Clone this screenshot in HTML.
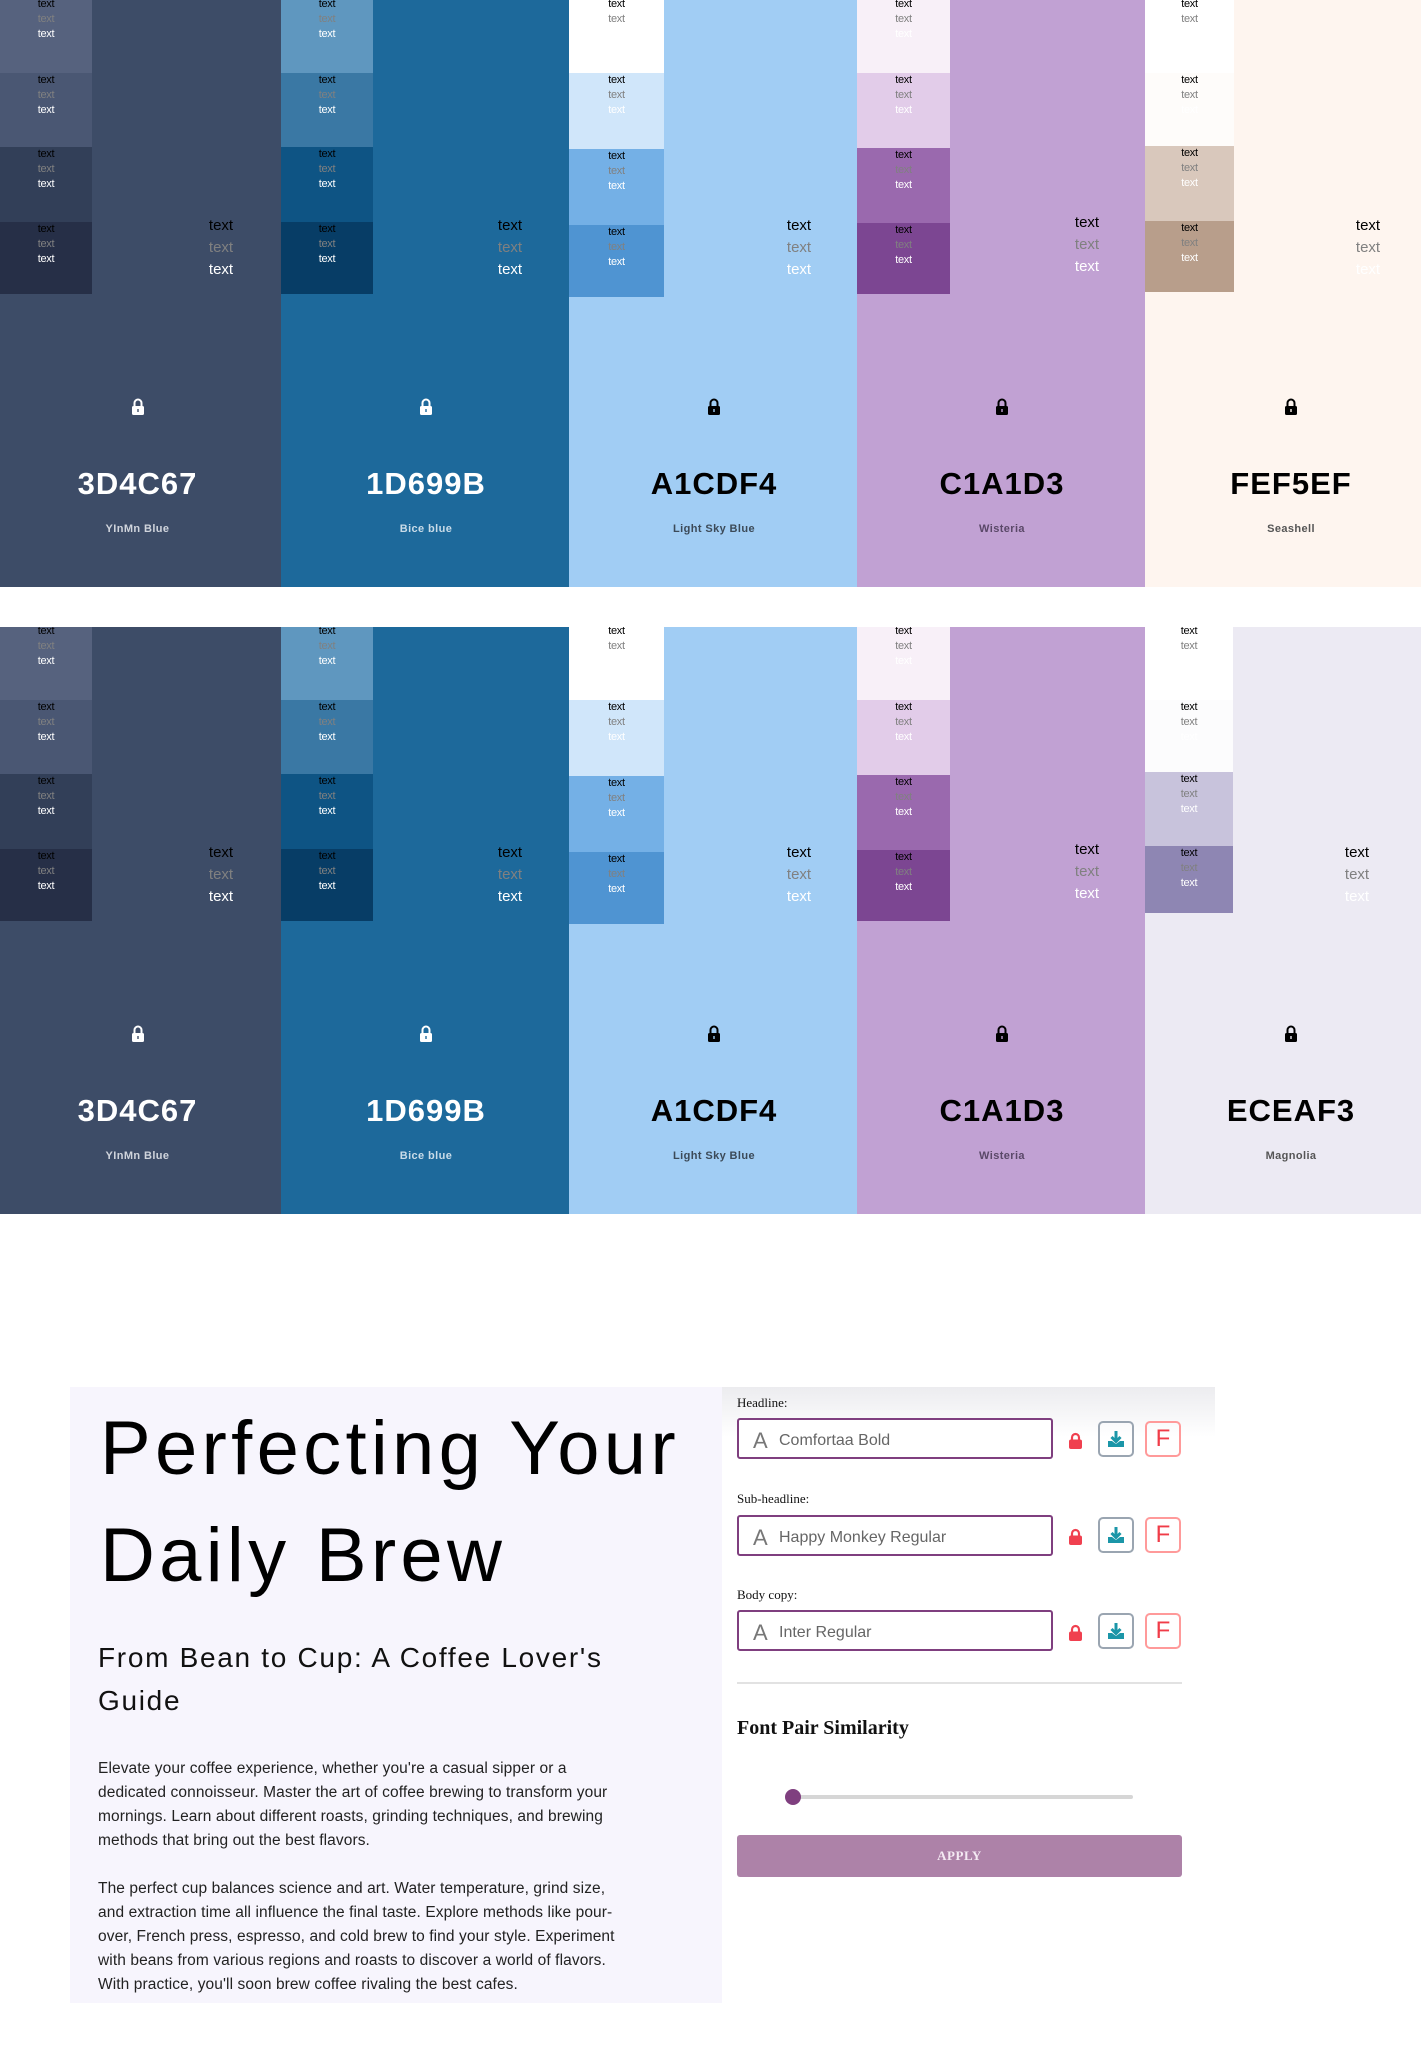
<!DOCTYPE html>
<html><head><meta charset="utf-8"><style>
*{margin:0;padding:0;box-sizing:border-box}
body{width:1421px;height:2046px;background:#fff;position:relative;overflow:hidden;font-family:"Liberation Sans",sans-serif}
.pal{position:absolute;left:0;width:1421px;height:587px}
.col{position:absolute;top:0;height:100%;overflow:hidden}
.sw{position:absolute;left:0;width:92px;text-align:center;font-size:11px;line-height:15px;letter-spacing:-0.3px}
.sw div:nth-child(1){color:#000}.sw div:nth-child(2){color:#808080}.sw div:nth-child(3){color:#fff}
.big{position:absolute;left:191px;width:60px;top:215px;text-align:center;font-size:15px;line-height:22px}
.big div:nth-child(1){color:#000}.big div:nth-child(2){color:#808080}.big div:nth-child(3){color:#fff}
.lock,.hex,.nm{transform:translateX(var(--s))}
.lock{position:absolute;left:50%;margin-left:-7px;top:398px;width:14px;height:17px}
.hex{position:absolute;left:0;right:0;top:466px;text-align:center;font-size:31px;font-weight:bold;letter-spacing:1px}
.nm{position:absolute;left:0;right:0;top:523px;text-align:center;font-size:11px;font-weight:bold;letter-spacing:0.4px}
.c1{--s:-3px}.c2{--s:1px}.c3{--s:1px}.c4{--s:1px}.c5{--s:8px}
.card{position:absolute;left:70px;top:1387px;width:652px;height:616px;background:#f7f5fd}
.rp{position:absolute;left:722px;top:1387px;width:493px;height:616px;background:#fff}
.rp .sh{position:absolute;left:0;right:0;top:0;height:50px;background:linear-gradient(#ececef,#fff)}
.lab{position:absolute;left:15px;font-family:"Liberation Serif",serif;font-size:13px;color:#111}
.inp{position:absolute;left:15px;width:316px;height:41px;border:2px solid #7f3f7f;border-radius:3px;background:#fff;font-size:16px;color:#666;padding-left:40px;line-height:41px}
.inp span{position:absolute;left:14px;top:0;font-size:22px;color:#777}
.lk{position:absolute;left:346px;width:15px;height:17px}
.dl{position:absolute;left:376px;width:36px;height:36px;border:2px solid #9aa5b1;border-radius:5px}
.fb{position:absolute;left:423px;width:36px;height:36px;border:2px solid #ff9a9a;border-radius:5px;color:#f03c48;font-size:24px;text-align:center;line-height:32px}
</style></head><body>

<!-- palette 1 -->
<div class="pal" style="top:0">
 <div class="col c1" style="left:0;width:281px;background:#3d4c67">
  <div class="sw" style="top:0;height:73px;background:#56627e"><div style="margin-top:-3px">text</div><div>text</div><div>text</div></div>
  <div class="sw" style="top:73px;height:74px;background:#4a5773"><div>text</div><div>text</div><div>text</div></div>
  <div class="sw" style="top:147px;height:75px;background:#323f58"><div>text</div><div>text</div><div>text</div></div>
  <div class="sw" style="top:222px;height:72px;background:#262f47"><div>text</div><div>text</div><div>text</div></div>
  <div class="big"><div>text</div><div>text</div><div>text</div></div>
  <svg class="lock" viewBox="0 0 14 17"><path d="M3.5 8V5a3.5 3.5 0 0 1 7 0v3" fill="none" stroke="#fff" stroke-width="2"/><rect x="1" y="8" width="12" height="9" rx="1.5" fill="#fff"/><rect x="6.3" y="11" width="1.4" height="3" fill="#3d4c67"/></svg>
  <div class="hex" style="color:#fff">3D4C67</div><div class="nm" style="color:#d0d4dc">YInMn Blue</div>
 </div>
 <div class="col c2" style="left:281px;width:288px;background:#1d699b">
  <div class="sw" style="top:0;height:73px;background:#5f97bf"><div style="margin-top:-3px">text</div><div>text</div><div>text</div></div>
  <div class="sw" style="top:73px;height:74px;background:#3a78a4"><div>text</div><div>text</div><div>text</div></div>
  <div class="sw" style="top:147px;height:75px;background:#0e5484"><div>text</div><div>text</div><div>text</div></div>
  <div class="sw" style="top:222px;height:72px;background:#073d66"><div>text</div><div>text</div><div>text</div></div>
  <div class="big" style="left:199px"><div>text</div><div>text</div><div>text</div></div>
  <svg class="lock" viewBox="0 0 14 17"><path d="M3.5 8V5a3.5 3.5 0 0 1 7 0v3" fill="none" stroke="#fff" stroke-width="2"/><rect x="1" y="8" width="12" height="9" rx="1.5" fill="#fff"/><rect x="6.3" y="11" width="1.4" height="3" fill="#1d699b"/></svg>
  <div class="hex" style="color:#fff">1D699B</div><div class="nm" style="color:#c8dbe8">Bice blue</div>
 </div>
 <div class="col c3" style="left:569px;width:288px;background:#a1cdf4">
  <div class="sw" style="top:0;height:73px;background:#fff;width:95px"><div style="margin-top:-3px">text</div><div>text</div><div>text</div></div>
  <div class="sw" style="top:73px;height:76px;background:#d0e6fa;width:95px"><div>text</div><div>text</div><div>text</div></div>
  <div class="sw" style="top:149px;height:76px;background:#74b0e6;width:95px"><div>text</div><div>text</div><div>text</div></div>
  <div class="sw" style="top:225px;height:72px;background:#4f94d2;width:95px"><div>text</div><div>text</div><div>text</div></div>
  <div class="big" style="left:200px"><div>text</div><div>text</div><div>text</div></div>
  <svg class="lock" viewBox="0 0 14 17"><path d="M3.5 8V5a3.5 3.5 0 0 1 7 0v3" fill="none" stroke="#000" stroke-width="2"/><rect x="1" y="8" width="12" height="9" rx="1.5" fill="#000"/><rect x="6.3" y="11" width="1.4" height="3" fill="#a1cdf4"/></svg>
  <div class="hex" style="color:#000">A1CDF4</div><div class="nm" style="color:#3c4a58">Light Sky Blue</div>
 </div>
 <div class="col c4" style="left:857px;width:288px;background:#c1a1d3">
  <div class="sw" style="top:0;height:73px;background:#f8f0f8;width:93px"><div style="margin-top:-3px">text</div><div>text</div><div>text</div></div>
  <div class="sw" style="top:73px;height:75px;background:#e2cce9;width:93px"><div>text</div><div>text</div><div>text</div></div>
  <div class="sw" style="top:148px;height:75px;background:#9a69ae;width:93px"><div>text</div><div>text</div><div>text</div></div>
  <div class="sw" style="top:223px;height:71px;background:#7c4692;width:93px"><div>text</div><div>text</div><div>text</div></div>
  <div class="big" style="left:200px;top:212px"><div>text</div><div>text</div><div>text</div></div>
  <svg class="lock" viewBox="0 0 14 17"><path d="M3.5 8V5a3.5 3.5 0 0 1 7 0v3" fill="none" stroke="#000" stroke-width="2"/><rect x="1" y="8" width="12" height="9" rx="1.5" fill="#000"/><rect x="6.3" y="11" width="1.4" height="3" fill="#c1a1d3"/></svg>
  <div class="hex" style="color:#000">C1A1D3</div><div class="nm" style="color:#5a4868">Wisteria</div>
 </div>
 <div class="col c5" style="left:1145px;width:276px;background:#fef5ef">
  <div class="sw" style="top:0;height:73px;background:#fff;width:89px"><div style="margin-top:-3px">text</div><div>text</div><div>text</div></div>
  <div class="sw" style="top:73px;height:73px;background:#fefcfa;width:89px"><div>text</div><div>text</div><div>text</div></div>
  <div class="sw" style="top:146px;height:75px;background:#d9c8bc;width:89px"><div>text</div><div>text</div><div>text</div></div>
  <div class="sw" style="top:221px;height:71px;background:#b89e8b;width:89px"><div>text</div><div>text</div><div>text</div></div>
  <div class="big" style="left:193px"><div>text</div><div>text</div><div>text</div></div>
  <svg class="lock" viewBox="0 0 14 17"><path d="M3.5 8V5a3.5 3.5 0 0 1 7 0v3" fill="none" stroke="#000" stroke-width="2"/><rect x="1" y="8" width="12" height="9" rx="1.5" fill="#000"/><rect x="6.3" y="11" width="1.4" height="3" fill="#fef5ef"/></svg>
  <div class="hex" style="color:#000">FEF5EF</div><div class="nm" style="color:#555">Seashell</div>
 </div>
</div>

<!-- palette 2 -->
<div class="pal" style="top:627px">
 <div class="col c1" style="left:0;width:281px;background:#3d4c67">
  <div class="sw" style="top:0;height:73px;background:#56627e"><div style="margin-top:-3px">text</div><div>text</div><div>text</div></div>
  <div class="sw" style="top:73px;height:74px;background:#4a5773"><div>text</div><div>text</div><div>text</div></div>
  <div class="sw" style="top:147px;height:75px;background:#323f58"><div>text</div><div>text</div><div>text</div></div>
  <div class="sw" style="top:222px;height:72px;background:#262f47"><div>text</div><div>text</div><div>text</div></div>
  <div class="big"><div>text</div><div>text</div><div>text</div></div>
  <svg class="lock" viewBox="0 0 14 17"><path d="M3.5 8V5a3.5 3.5 0 0 1 7 0v3" fill="none" stroke="#fff" stroke-width="2"/><rect x="1" y="8" width="12" height="9" rx="1.5" fill="#fff"/><rect x="6.3" y="11" width="1.4" height="3" fill="#3d4c67"/></svg>
  <div class="hex" style="color:#fff">3D4C67</div><div class="nm" style="color:#d0d4dc">YInMn Blue</div>
 </div>
 <div class="col c2" style="left:281px;width:288px;background:#1d699b">
  <div class="sw" style="top:0;height:73px;background:#5f97bf"><div style="margin-top:-3px">text</div><div>text</div><div>text</div></div>
  <div class="sw" style="top:73px;height:74px;background:#3a78a4"><div>text</div><div>text</div><div>text</div></div>
  <div class="sw" style="top:147px;height:75px;background:#0e5484"><div>text</div><div>text</div><div>text</div></div>
  <div class="sw" style="top:222px;height:72px;background:#073d66"><div>text</div><div>text</div><div>text</div></div>
  <div class="big" style="left:199px"><div>text</div><div>text</div><div>text</div></div>
  <svg class="lock" viewBox="0 0 14 17"><path d="M3.5 8V5a3.5 3.5 0 0 1 7 0v3" fill="none" stroke="#fff" stroke-width="2"/><rect x="1" y="8" width="12" height="9" rx="1.5" fill="#fff"/><rect x="6.3" y="11" width="1.4" height="3" fill="#1d699b"/></svg>
  <div class="hex" style="color:#fff">1D699B</div><div class="nm" style="color:#c8dbe8">Bice blue</div>
 </div>
 <div class="col c3" style="left:569px;width:288px;background:#a1cdf4">
  <div class="sw" style="top:0;height:73px;background:#fff;width:95px"><div style="margin-top:-3px">text</div><div>text</div><div>text</div></div>
  <div class="sw" style="top:73px;height:76px;background:#d0e6fa;width:95px"><div>text</div><div>text</div><div>text</div></div>
  <div class="sw" style="top:149px;height:76px;background:#74b0e6;width:95px"><div>text</div><div>text</div><div>text</div></div>
  <div class="sw" style="top:225px;height:72px;background:#4f94d2;width:95px"><div>text</div><div>text</div><div>text</div></div>
  <div class="big" style="left:200px"><div>text</div><div>text</div><div>text</div></div>
  <svg class="lock" viewBox="0 0 14 17"><path d="M3.5 8V5a3.5 3.5 0 0 1 7 0v3" fill="none" stroke="#000" stroke-width="2"/><rect x="1" y="8" width="12" height="9" rx="1.5" fill="#000"/><rect x="6.3" y="11" width="1.4" height="3" fill="#a1cdf4"/></svg>
  <div class="hex" style="color:#000">A1CDF4</div><div class="nm" style="color:#3c4a58">Light Sky Blue</div>
 </div>
 <div class="col c4" style="left:857px;width:288px;background:#c1a1d3">
  <div class="sw" style="top:0;height:73px;background:#f8f0f8;width:93px"><div style="margin-top:-3px">text</div><div>text</div><div>text</div></div>
  <div class="sw" style="top:73px;height:75px;background:#e2cce9;width:93px"><div>text</div><div>text</div><div>text</div></div>
  <div class="sw" style="top:148px;height:75px;background:#9a69ae;width:93px"><div>text</div><div>text</div><div>text</div></div>
  <div class="sw" style="top:223px;height:71px;background:#7c4692;width:93px"><div>text</div><div>text</div><div>text</div></div>
  <div class="big" style="left:200px;top:212px"><div>text</div><div>text</div><div>text</div></div>
  <svg class="lock" viewBox="0 0 14 17"><path d="M3.5 8V5a3.5 3.5 0 0 1 7 0v3" fill="none" stroke="#000" stroke-width="2"/><rect x="1" y="8" width="12" height="9" rx="1.5" fill="#000"/><rect x="6.3" y="11" width="1.4" height="3" fill="#c1a1d3"/></svg>
  <div class="hex" style="color:#000">C1A1D3</div><div class="nm" style="color:#5a4868">Wisteria</div>
 </div>
 <div class="col c5" style="left:1145px;width:276px;background:#eceaf3">
  <div class="sw" style="top:0;height:73px;background:#fff;width:88px"><div style="margin-top:-3px">text</div><div>text</div><div>text</div></div>
  <div class="sw" style="top:73px;height:72px;background:#fcfcfd;width:88px"><div>text</div><div>text</div><div>text</div></div>
  <div class="sw" style="top:145px;height:74px;background:#c8c3dc;width:88px"><div>text</div><div>text</div><div>text</div></div>
  <div class="sw" style="top:219px;height:67px;background:#8e86b3;width:88px"><div>text</div><div>text</div><div>text</div></div>
  <div class="big" style="left:182px"><div>text</div><div>text</div><div>text</div></div>
  <svg class="lock" viewBox="0 0 14 17"><path d="M3.5 8V5a3.5 3.5 0 0 1 7 0v3" fill="none" stroke="#000" stroke-width="2"/><rect x="1" y="8" width="12" height="9" rx="1.5" fill="#000"/><rect x="6.3" y="11" width="1.4" height="3" fill="#eceaf3"/></svg>
  <div class="hex" style="color:#000">ECEAF3</div><div class="nm" style="color:#555">Magnolia</div>
 </div>
</div>

<!-- bottom card -->
<div class="card">
 <div style="position:absolute;left:30px;top:8px;font-size:76px;line-height:107px;color:#000;letter-spacing:4.3px">Perfecting Your<br>Daily Brew</div>
 <div style="position:absolute;left:28px;top:249px;font-size:28px;line-height:43px;color:#111;letter-spacing:1.7px">From Bean to Cup: A Coffee Lover's<br>Guide</div>
 <div style="position:absolute;left:28px;top:370px;font-size:15.5px;line-height:24px;color:#222;letter-spacing:0.1px">Elevate your coffee experience, whether you're a casual sipper or a<br>dedicated connoisseur. Master the art of coffee brewing to transform your<br>mornings. Learn about different roasts, grinding techniques, and brewing<br>methods that bring out the best flavors.</div>
 <div style="position:absolute;left:28px;top:490px;font-size:15.5px;line-height:24px;color:#222;letter-spacing:0.1px">The perfect cup balances science and art. Water temperature, grind size,<br>and extraction time all influence the final taste. Explore methods like pour-<br>over, French press, espresso, and cold brew to find your style. Experiment<br>with beans from various regions and roasts to discover a world of flavors.<br>With practice, you'll soon brew coffee rivaling the best cafes.</div>
</div>
<div class="rp">
 <div class="sh"></div>
 <div class="lab" style="top:8px">Headline:</div>
 <div class="inp" style="top:31px"><span>A</span>Comfortaa Bold</div>
 <svg class="lk" style="top:45px" viewBox="0 0 15 17"><path d="M4 8V5.5a3.5 3.5 0 0 1 7 0V8" fill="none" stroke="#f0404f" stroke-width="2.2"/><rect x="1" y="7.5" width="13" height="9.5" rx="2" fill="#f0404f"/></svg>
 <div class="dl" style="top:34px"><svg width="32" height="32" viewBox="0 0 32 32"><path d="M16 8v10M11.5 14l4.5 4.5 4.5-4.5" fill="none" stroke="#1b96a8" stroke-width="3"/><path d="M8 18v6h16v-6h-4l-4 3-4-3z" fill="#1b96a8"/></svg></div>
 <div class="fb" style="top:34px">F</div>

 <div class="lab" style="top:104px">Sub-headline:</div>
 <div class="inp" style="top:128px"><span>A</span>Happy Monkey Regular</div>
 <svg class="lk" style="top:141px" viewBox="0 0 15 17"><path d="M4 8V5.5a3.5 3.5 0 0 1 7 0V8" fill="none" stroke="#f0404f" stroke-width="2.2"/><rect x="1" y="7.5" width="13" height="9.5" rx="2" fill="#f0404f"/></svg>
 <div class="dl" style="top:130px"><svg width="32" height="32" viewBox="0 0 32 32"><path d="M16 8v10M11.5 14l4.5 4.5 4.5-4.5" fill="none" stroke="#1b96a8" stroke-width="3"/><path d="M8 18v6h16v-6h-4l-4 3-4-3z" fill="#1b96a8"/></svg></div>
 <div class="fb" style="top:130px">F</div>

 <div class="lab" style="top:200px">Body copy:</div>
 <div class="inp" style="top:223px"><span>A</span>Inter Regular</div>
 <svg class="lk" style="top:237px" viewBox="0 0 15 17"><path d="M4 8V5.5a3.5 3.5 0 0 1 7 0V8" fill="none" stroke="#f0404f" stroke-width="2.2"/><rect x="1" y="7.5" width="13" height="9.5" rx="2" fill="#f0404f"/></svg>
 <div class="dl" style="top:226px"><svg width="32" height="32" viewBox="0 0 32 32"><path d="M16 8v10M11.5 14l4.5 4.5 4.5-4.5" fill="none" stroke="#1b96a8" stroke-width="3"/><path d="M8 18v6h16v-6h-4l-4 3-4-3z" fill="#1b96a8"/></svg></div>
 <div class="fb" style="top:226px">F</div>

 <div style="position:absolute;left:15px;top:295px;width:445px;height:2px;background:#e2e2e2"></div>
 <div style="position:absolute;left:15px;top:330px;font-family:'Liberation Serif',serif;font-weight:bold;font-size:20px;color:#111">Font Pair Similarity</div>
 <div style="position:absolute;left:64px;top:408px;width:347px;height:4px;border-radius:2px;background:#d6d6d6"></div>
 <div style="position:absolute;left:63px;top:402px;width:16px;height:16px;border-radius:50%;background:#7f3f7f"></div>
 <div style="position:absolute;left:15px;top:448px;width:445px;height:42px;border-radius:3px;background:#ad82a8;color:#f4eaf3;text-align:center;line-height:42px;font-family:'Liberation Serif',serif;font-weight:bold;font-size:13px;letter-spacing:0.5px">APPLY</div>
</div>
</body></html>
